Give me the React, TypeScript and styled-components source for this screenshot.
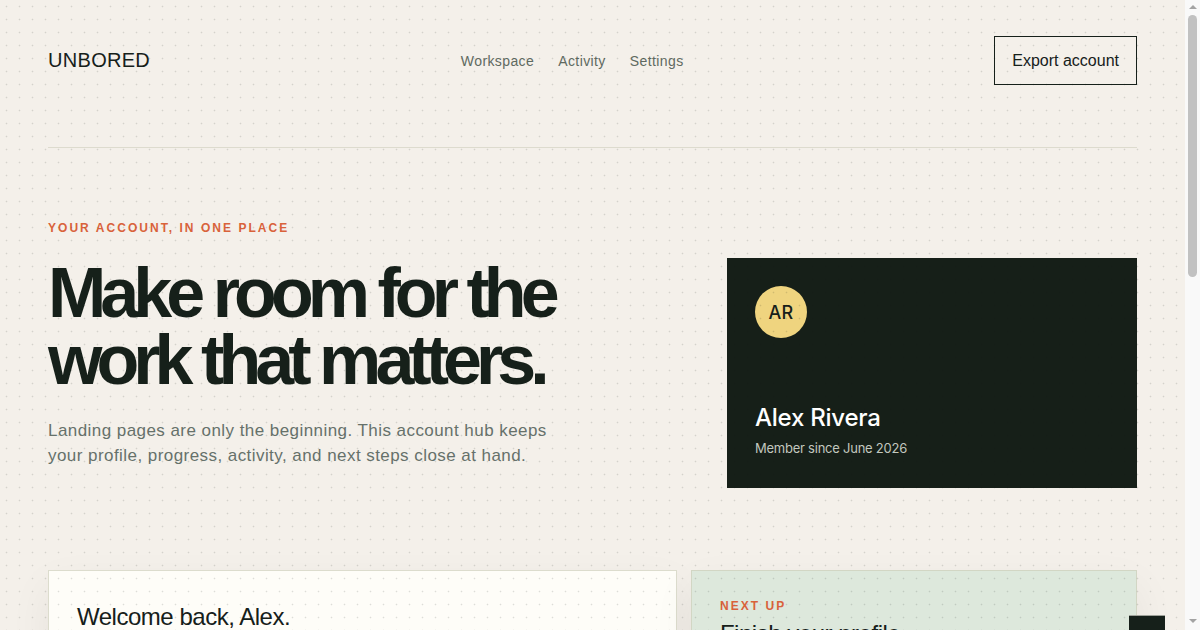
import React from "react";
import styled, { createGlobalStyle } from "styled-components";

const ink = "#16201a";
const muted = "#66716a";
const accent = "#d9623b";
const sans = `"Liberation Sans", Arial, sans-serif`;
const ui = `Inter, "Noto Sans", sans-serif`;

const GlobalStyle = createGlobalStyle`
  html, body {
    margin: 0;
    padding: 0;
    background: #f4f0ea;
    color: ${ink};
    font-family: ${sans};
    letter-spacing: 0.025em;
  }

  body::after {
    content: "";
    position: fixed;
    inset: 0 15px 0 0;
    pointer-events: none;
    z-index: 10;
    background-image: radial-gradient(circle, rgba(22, 32, 26, 0.14) 0.7px, transparent 1.1px);
    background-size: 13px 13px;
  }
`;

const Page = styled.div`
  padding: 0 63px 80px 48px;
`;

const Header = styled.header`
  display: flex;
  align-items: center;
  justify-content: space-between;
  padding: 36px 0 62px;
  border-bottom: 1px solid #dddbce;
`;

const Logo = styled.div`
  font-size: 20px;
  letter-spacing: 0.015em;
  color: ${ink};
`;

const Nav = styled.nav`
  display: flex;
  gap: 24px;
`;

const NavLink = styled.a`
  font-size: 14px;
  color: #5f6a61;
  text-decoration: none;
`;

const OutlineButton = styled.button`
  font-family: ${sans};
  font-size: 16px;
  line-height: 1.2;
  letter-spacing: normal;
  color: ${ink};
  background: transparent;
  border: 1px solid ${ink};
  padding: 14px 17px;
`;

const Hero = styled.section`
  display: grid;
  grid-template-columns: 1fr 410px;
  gap: 40px;
  align-items: start;
  padding: 73px 0 82px;
`;

const Eyebrow = styled.div`
  font-size: 12px;
  line-height: 1.2;
  font-weight: 700;
  letter-spacing: 0.17em;
  text-transform: uppercase;
  color: ${accent};
`;

const Title = styled.h1`
  margin: 24px 0 0;
  max-width: 620px;
  font-size: 70px;
  line-height: 0.96;
  font-weight: 700;
  letter-spacing: -0.085em;
  color: ${ink};
`;

const Lead = styled.p`
  margin: 24px 0 0;
  max-width: 530px;
  font-size: 17px;
  line-height: 1.5;
  letter-spacing: 0.026em;
  color: ${muted};
`;

const ProfileCard = styled.div`
  margin-top: 37px;
  min-height: 230px;
  box-sizing: border-box;
  padding: 28px 28px 31px;
  background: #161f18;
  display: flex;
  flex-direction: column;
  justify-content: space-between;
  font-family: ${ui};
  letter-spacing: -0.015em;
`;

const Avatar = styled.div`
  width: 52px;
  height: 52px;
  border-radius: 50%;
  background: #efd47f;
  color: ${ink};
  display: flex;
  align-items: center;
  justify-content: center;
  font-size: 18px;
  font-weight: 500;
  letter-spacing: 0.02em;
`;

const Name = styled.div`
  font-size: 24px;
  font-weight: 500;
  line-height: 1.2;
  color: #ffffff;
`;

const Since = styled.div`
  margin-top: 6px;
  font-size: 13px;
  line-height: 1.4;
  color: #c3c8bf;
`;

const Panels = styled.section`
  display: grid;
  grid-template-columns: 1.41fr 1fr;
  gap: 14px;
`;

const Panel = styled.div<{ $tone: "paper" | "sage" }>`
  position: relative;
  padding: 28px;
  border: 1px solid ${(p) => (p.$tone === "paper" ? "#dcdccd" : "#d2d6c4")};
  background: ${(p) => (p.$tone === "paper" ? "#fefdf8" : "#dde8dc")};
  box-shadow: 0 16px 40px rgba(22, 32, 26, 0.06);
`;

const PanelTitle = styled.h2<{ $spaced?: boolean }>`
  margin: ${(p) => (p.$spaced ? "6px 0 0" : "4px 0 0")};
  font-size: 24px;
  line-height: 1.2;
  font-weight: 400;
  letter-spacing: -0.02em;
  color: ${ink};
`;

const PanelText = styled.p`
  margin: 12px 0 0;
  font-size: 15px;
  line-height: 1.5;
  color: ${muted};
`;

const Progress = styled.div`
  margin-top: 20px;
  height: 6px;
  background: #e6e4d8;
`;

const ProgressFill = styled.div`
  height: 100%;
  background: ${ink};
`;

const FloatingTab = styled.div`
  position: absolute;
  top: 44px;
  right: -29px;
  width: 36px;
  height: 40px;
  background: ${ink};
  border-top: 1px solid #9fa29a;
`;

/* browser scrollbar as it shows in the captured window */
const ScrollRail = styled.div`
  position: fixed;
  top: 0;
  right: 0;
  bottom: 0;
  width: 15px;
  background: #f9f9f9;
  display: flex;
  flex-direction: column;
  align-items: center;
  z-index: 20;
`;

const RailArrow = styled.div<{ $dir: "up" | "down" }>`
  width: 0;
  height: 0;
  margin: ${(p) => (p.$dir === "up" ? "5px 0 0" : "auto 0 7px")};
  border-left: 4px solid transparent;
  border-right: 4px solid transparent;
  ${(p) =>
    p.$dir === "up"
      ? "border-bottom: 4px solid #a3a3a3;"
      : "border-top: 4px solid #a3a3a3;"}
`;

const RailThumb = styled.div`
  margin-top: 6px;
  width: 9px;
  height: 262px;
  border-radius: 5px;
  background: #c1c1c1;
`;

export default function App() {
  const progress = 68;

  return (
    <>
      <GlobalStyle />
      <Page>
        <Header>
          <Logo>UNBORED</Logo>
          <Nav>
            <NavLink href="#">Workspace</NavLink>
            <NavLink href="#">Activity</NavLink>
            <NavLink href="#">Settings</NavLink>
          </Nav>
          <OutlineButton>Export account</OutlineButton>
        </Header>

        <Hero>
          <div>
            <Eyebrow>Your account, in one place</Eyebrow>
            <Title>Make room for the work that matters.</Title>
            <Lead>
              Landing pages are only the beginning. This account hub keeps your profile,
              progress, activity, and next steps close at hand.
            </Lead>
          </div>
          <ProfileCard>
            <Avatar>AR</Avatar>
            <div>
              <Name>Alex Rivera</Name>
              <Since>Member since June 2026</Since>
            </div>
          </ProfileCard>
        </Hero>

        <Panels>
          <Panel $tone="paper">
            <PanelTitle>Welcome back, Alex.</PanelTitle>
            <PanelText>You have three open tasks and one project waiting for review.</PanelText>
            <Progress>
              <ProgressFill style={{ width: `${progress}%` }} />
            </Progress>
          </Panel>
          <Panel $tone="sage">
            <Eyebrow>Next up</Eyebrow>
            <PanelTitle $spaced>Finish your profile</PanelTitle>
            <PanelText>Add a short bio and a photo so your team knows who you are.</PanelText>
            <FloatingTab />
          </Panel>
        </Panels>
      </Page>
      <ScrollRail aria-hidden>
        <RailArrow $dir="up" />
        <RailThumb />
        <RailArrow $dir="down" />
      </ScrollRail>
    </>
  );
}
